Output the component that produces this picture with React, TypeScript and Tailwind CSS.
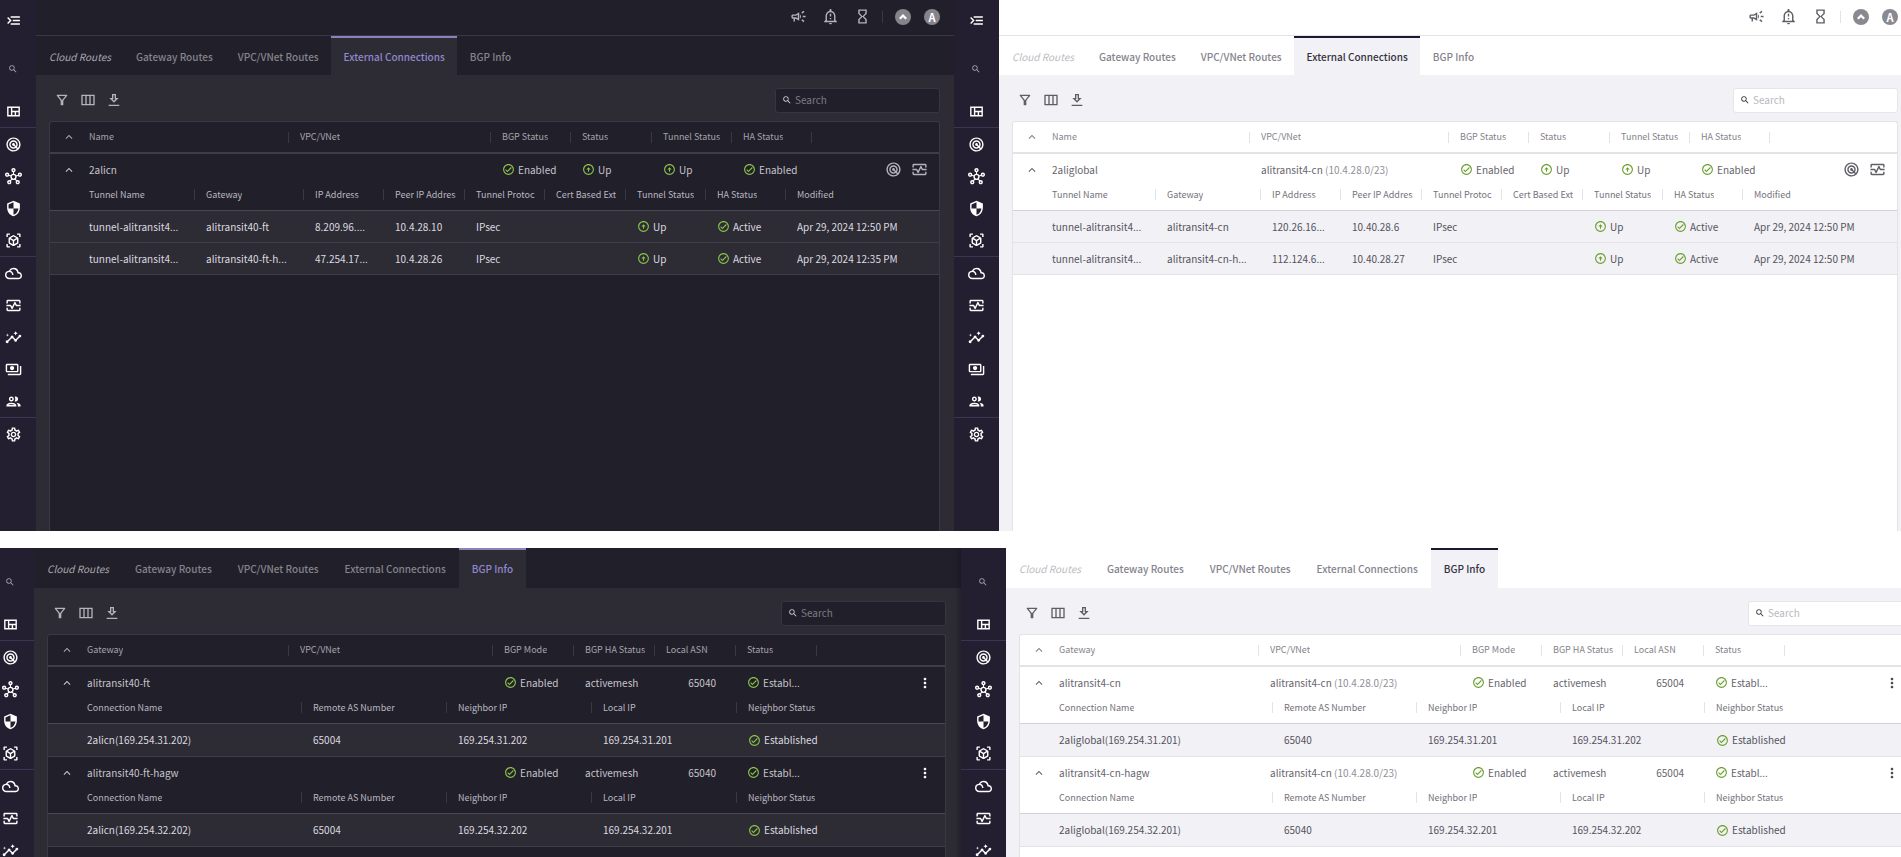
import { useState } from "react";
import type { ReactNode } from "react";
import {
  MdArrowCircleUp,
  MdFilterDrama,
  MdHourglassEmpty,
  MdInsights,
  MdKeyboardArrowUp,
  MdMenuOpen,
  MdMoreVert,
  MdOutlineCampaign,
  MdOutlineCheckCircle,
  MdOutlineFilterAlt,
  MdOutlineGroup,
  MdOutlineHub,
  MdOutlineMonitorHeart,
  MdOutlineNotificationImportant,
  MdOutlinePayments,
  MdOutlineSettings,
  MdOutlineViewQuilt,
  MdRadar,
  MdSearch,
  MdSecurity,
  MdViewInAr
} from "react-icons/md";

const TABS = ["Cloud Routes", "Gateway Routes", "VPC/VNet Routes", "External Connections", "BGP Info"];

const DARK = {
  bar: "bg-[#211f29] border-[#3a3842]",
  body: "bg-[#2d2b33]",
  tab: "border-transparent text-[#85838b]",
  tabFirst: "border-transparent text-[#aaa8b0]",
  tabActive: "border-[#8882bd] bg-[#2d2b33] text-[#8f88cf]",
  tool: "text-[#b4b2bb]",
  top: "text-[#b4b2bb]",
  avatar: "bg-[#85838c] text-white",
  field: "border-[#37353f] bg-[#211f29] placeholder:text-[#7d7b84]",
  fieldIcon: "text-[#d0ced6]",
  table: "border-[#3a3842] bg-[#211f29]",
  line: "border-[#3f3d47]",
  strongLine: "border-[#4a4852]",
  divider: "border-[#3a3842]",
  head: "text-[#a5a3ac]",
  subHead: "text-[#b9b7c0]",
  group: "text-[#c6c4cc]",
  muted: "text-[#a5a3ac]",
  row: "bg-[#2d2b33] text-[#dcdae0]",
  ok: "text-[#8bc34a]",
  kebab: "text-white"
};

const LIGHT: typeof DARK = {
  bar: "bg-white border-[#e3e2e7]",
  body: "bg-[#f2f1f6]",
  tab: "border-transparent text-[#85838d]",
  tabFirst: "border-transparent text-[#bdbcc2]",
  tabActive: "border-[#1b1830] bg-[#f2f1f6] text-[#35323f]",
  tool: "text-[#5f5d66]",
  top: "text-[#5f5d66]",
  avatar: "bg-[#8a8891] text-white",
  field: "border-[#e6e5ea] bg-white placeholder:text-[#b9b8be]",
  fieldIcon: "text-[#35323f]",
  table: "border-[#e3e2e7] bg-white",
  line: "border-[#e3e2e7]",
  strongLine: "border-[#d3d1da]",
  divider: "border-[#e3e2e7]",
  head: "text-[#85838b]",
  subHead: "text-[#74727a]",
  group: "text-[#66646d]",
  muted: "text-[#918f98]",
  row: "bg-[#f2f1f6] text-[#55535c]",
  ok: "text-[#6a9f2e]",
  kebab: "text-[#4a4852]"
};

type Theme = typeof DARK;

type Column = {
  label: string;
  width?: string;
};

type Group = {
  cells: ReactNode[];
  rows: ReactNode[][];
};

const NAV_GROUPS = [
  [{ label: "Dashboard", Icon: MdOutlineViewQuilt }],
  [
    { label: "CoPilot", Icon: MdRadar },
    { label: "Networking", Icon: MdOutlineHub },
    { label: "Security", Icon: MdSecurity },
    { label: "Cloud Resources", Icon: MdViewInAr }
  ],
  [
    { label: "Cloud Fabric", Icon: MdFilterDrama },
    { label: "Diagnostics", Icon: MdOutlineMonitorHeart },
    { label: "Monitor", Icon: MdInsights },
    { label: "Billing", Icon: MdOutlinePayments },
    { label: "Administration", Icon: MdOutlineGroup }
  ],
  [{ label: "Settings", Icon: MdOutlineSettings }]
];

const Sidebar = ({ className, inset, withMenu }: { className: string; inset: string; withMenu: boolean }) => (
  <nav aria-label="Main" className={`shrink-0 bg-[#231e30] text-white ${className}`}>
    {withMenu ? (
      <button type="button" aria-label="Expand menu" className={`flex h-10 w-full items-center justify-center ${inset}`}>
        <MdMenuOpen className="size-[17px] shrink-0 -scale-x-100" />
      </button>
    ) : (
      <div className="h-[5px]" />
    )}
    <button type="button" aria-label="Search menu" className={`flex h-[55px] w-full items-center justify-center pt-0.5 text-[#a5a3ac] ${inset}`}>
      <MdSearch className="size-[10px] shrink-0" />
    </button>
    {NAV_GROUPS.map((group, index) => (
      <ul key={index} className="border-b border-[#3b3455] last:border-b-0">
        {group.map(({ label, Icon }) => (
          <li key={label}>
            <a href="#" aria-label={label} className={`flex h-8 items-center justify-center ${inset}`}>
              <Icon className="size-[17px] shrink-0" />
            </a>
          </li>
        ))}
      </ul>
    ))}
  </nav>
);

const TopBar = ({ theme, className }: { theme: Theme; className: string }) => (
  <header className={`flex h-9 items-center justify-end border-b pb-0.5 ${theme.bar} ${className}`}>
    {[
      { label: "Announcements", Icon: MdOutlineCampaign },
      { label: "Notifications", Icon: MdOutlineNotificationImportant },
      { label: "Tasks", Icon: MdHourglassEmpty }
    ].map(({ label, Icon }) => (
      <button key={label} type="button" aria-label={label} className={`flex w-8 justify-center ${theme.top}`}>
        <Icon className="size-[17px]" />
      </button>
    ))}
    <span className={`mr-3 ml-1 h-3 border-r ${theme.divider}`} />
    <button type="button" aria-label="Controller" className={`mr-[13px] flex size-4 items-center justify-center rounded-full ${theme.avatar}`}>
      <svg viewBox="0 0 16 16" className="size-4" fill="none" stroke="currentColor" strokeWidth="2.2">
        <path d="M4.8 9.8 8 6.6l3.2 3.2" />
      </svg>
    </button>
    <button type="button" aria-label="Account" className={`flex size-4 items-center justify-center rounded-full text-[11px] font-bold leading-4 ${theme.avatar}`}>
      A
    </button>
  </header>
);

type TabBarProps = {
  theme: Theme;
  className: string;
  tabClass: string;
  active: string;
  onSelect: (tab: string) => void;
};

const TabBar = ({ theme, className, tabClass, active, onSelect }: TabBarProps) => (
  <div role="tablist" className={`flex ${className} ${theme.bar}`}>
    {TABS.map((tab, index) => (
      <button
        key={tab}
        type="button"
        role="tab"
        aria-selected={tab === active}
        onClick={() => onSelect(tab)}
        className={`whitespace-nowrap border-t-2 pb-px text-[10px] ${tabClass} ${
          tab === active
            ? `font-medium ${theme.tabActive}`
            : index === 0
              ? `italic ${theme.tabFirst}`
              : `font-medium ${theme.tab}`
        }`}
      >
        {tab}
      </button>
    ))}
  </div>
);

const Toolbar = ({ theme, searchId }: { theme: Theme; searchId: string }) => (
  <div className="flex h-[46px] items-center pt-1">
    <div className={`flex items-center gap-[9px] pl-[5px] ${theme.tool}`}>
      <button type="button" aria-label="Filter">
        <MdOutlineFilterAlt className="size-4" />
      </button>
      <button type="button" aria-label="Columns">
        <svg viewBox="0 0 24 24" className="mx-px size-4" fill="none" stroke="currentColor" strokeWidth="2">
          <path d="M3 5h18v14H3zM9 5v14M15 5v14" />
        </svg>
      </button>
      <button type="button" aria-label="Download">
        <svg viewBox="0 0 24 24" className="size-4" fill="currentColor">
          <path d="M19 9h-4V3H9v6H5l7 7 7-7zm-8 2V5h2v6h1.17L12 13.17 9.83 11H11zM4 19h16v2H4z" />
        </svg>
      </button>
    </div>
    <label htmlFor={searchId} className={`ml-auto flex h-[25px] w-[165px] items-center rounded-[3px] border pl-1.5 ${theme.field}`}>
      <MdSearch className={`mr-[3px] size-[10px] shrink-0 ${theme.fieldIcon}`} />
      <input
        id={searchId}
        type="search"
        placeholder="Search"
        className={`w-full bg-transparent text-[10px] leading-4 outline-none ${theme.field}`}
      />
    </label>
  </div>
);

const Status = ({ theme, kind, children }: { theme: Theme; kind: "check" | "up"; children: ReactNode }) => {
  const Icon = kind === "check" ? MdOutlineCheckCircle : MdArrowCircleUp;
  return (
    <span className="flex items-center gap-[3px]">
      <Icon className={`size-[13px] shrink-0 ${theme.ok}`} />
      {children}
    </span>
  );
};

const HeadLabel = ({ theme, label, last }: { theme: Theme; label: string; last: boolean }) => (
  <div className={`flex h-[11px] items-center pr-2 pl-[11px] ${last ? "" : `border-r ${theme.divider}`}`}>
    <span className="overflow-hidden whitespace-nowrap">{label}</span>
  </div>
);

type DataTableProps = {
  theme: Theme;
  columns: Column[];
  subColumns: Column[];
  groups: Group[];
  rowHeight: string;
  actions: ReactNode;
};

const DataTable = ({ theme, columns, subColumns, groups, rowHeight, actions }: DataTableProps) => {
  const [collapsed, setCollapsed] = useState<number[]>([]);
  const allCollapsed = collapsed.length === groups.length;

  const toggleGroup = (index: number) => {
    setCollapsed(prev => (prev.includes(index) ? prev.filter(item => item !== index) : [...prev, index]));
  };

  const toggleAll = () => {
    setCollapsed(allCollapsed ? [] : groups.map((_, index) => index));
  };

  return (
    <div className={`flex-1 overflow-hidden rounded-t-[3px] border border-b-0 ${theme.table}`}>
      <table className="w-full table-fixed border-separate border-spacing-0 text-left">
        <colgroup>
          <col className="w-7" />
          {columns.map(column => (
            <col key={column.label} className={column.width} />
          ))}
          <col />
        </colgroup>
        <thead className={`text-[9px] leading-4 ${theme.head}`}>
          <tr>
            <th className={`h-8 border-b-2 ${theme.line}`}>
              <button type="button" aria-label="Toggle all" onClick={toggleAll} className="flex w-full justify-end pr-0.5">
                <MdKeyboardArrowUp className={`size-[14px] ${allCollapsed ? "rotate-180" : ""}`} />
              </button>
            </th>
            {columns.map(column => (
              <th key={column.label} className={`border-b-2 font-normal ${theme.line}`}>
                <HeadLabel theme={theme} label={column.label} last={false} />
              </th>
            ))}
            <th className={`border-b-2 ${theme.line}`} />
          </tr>
        </thead>
        {groups.map((group, groupIndex) => {
          const open = !collapsed.includes(groupIndex);
          return (
            <tbody key={groupIndex}>
              <tr className={`text-[10px] leading-4 ${theme.group}`}>
                <td className="h-[31px]">
                  <button
                    type="button"
                    aria-label="Toggle group"
                    aria-expanded={open}
                    onClick={() => toggleGroup(groupIndex)}
                    className="flex w-full justify-end pr-0.5"
                  >
                    <MdKeyboardArrowUp className={`size-[14px] ${open ? "" : "rotate-180"}`} />
                  </button>
                </td>
                {group.cells.map((cell, index) => (
                  <td key={index} className="whitespace-nowrap pl-[11px]">
                    {cell}
                  </td>
                ))}
                <td>{actions}</td>
              </tr>
              {open ? (
                <tr>
                  <td colSpan={columns.length + 2}>
                    <table className="w-full table-fixed border-separate border-spacing-0">
                      <colgroup>
                        <col className="w-7" />
                        {subColumns.map(column => (
                          <col key={column.label} className={column.width} />
                        ))}
                      </colgroup>
                      <thead className={`text-[9px] leading-4 ${theme.subHead}`}>
                        <tr>
                          <td className={`h-[26px] border-b ${theme.strongLine}`} />
                          {subColumns.map((column, index) => (
                            <th key={column.label} className={`border-b pb-1.5 font-normal ${theme.strongLine}`}>
                              <HeadLabel theme={theme} label={column.label} last={index === subColumns.length - 1} />
                            </th>
                          ))}
                        </tr>
                      </thead>
                      <tbody className={`text-[10px] leading-4 ${theme.row}`}>
                        {group.rows.map((row, rowIndex) => (
                          <tr key={rowIndex}>
                            <td className={`border-b ${rowHeight} ${theme.line}`} />
                            {row.map((cell, index) => (
                              <td key={index} className={`whitespace-nowrap border-b pl-[11px] ${theme.line}`}>
                                {cell}
                              </td>
                            ))}
                          </tr>
                        ))}
                      </tbody>
                    </table>
                  </td>
                </tr>
              ) : null}
            </tbody>
          );
        })}
      </table>
    </div>
  );
};

const connectionGroup = (theme: Theme, name: string, vpc: ReactNode, tunnels: string[][]): Group => ({
  cells: [
    name,
    vpc,
    <Status theme={theme} kind="check">Enabled</Status>,
    <Status theme={theme} kind="up">Up</Status>,
    <Status theme={theme} kind="up">Up</Status>,
    <Status theme={theme} kind="check">Enabled</Status>
  ],
  rows: tunnels.map(([tunnel, gateway, ip, peerIp, modified]) => [
    tunnel,
    gateway,
    ip,
    peerIp,
    "IPsec",
    "",
    <Status theme={theme} kind="up">Up</Status>,
    <Status theme={theme} kind="check">Active</Status>,
    modified
  ])
});

const bgpGroup = (theme: Theme, gateway: string, vpc: ReactNode, asn: string, connection: string[]): Group => ({
  cells: [
    gateway,
    vpc,
    <Status theme={theme} kind="check">Enabled</Status>,
    "activemesh",
    <span className="block pr-5 text-right">{asn}</span>,
    <Status theme={theme} kind="check">Establ...</Status>
  ],
  rows: [[...connection, <Status theme={theme} kind="check">Established</Status>]]
});

const connectionColumns = (name: string, vpc: string): Column[] => [
  { label: "Name", width: name },
  { label: "VPC/VNet", width: vpc },
  { label: "BGP Status", width: "w-20" },
  { label: "Status", width: "w-[81px]" },
  { label: "Tunnel Status", width: "w-20" },
  { label: "HA Status", width: "w-20" }
];

const tunnelColumns = (name: string, gateway: string): Column[] => [
  { label: "Tunnel Name", width: name },
  { label: "Gateway", width: gateway },
  { label: "IP Address", width: "w-20" },
  { label: "Peer IP Address", width: "w-[81px]" },
  { label: "Tunnel Protoc", width: "w-20" },
  { label: "Cert Based Ext", width: "w-[81px]" },
  { label: "Tunnel Status", width: "w-20" },
  { label: "HA Status", width: "w-20" },
  { label: "Modified" }
];

const bgpColumns = (gateway: string, vpc: string): Column[] => [
  { label: "Gateway", width: gateway },
  { label: "VPC/VNet", width: vpc },
  { label: "BGP Mode", width: "w-[81px]" },
  { label: "BGP HA Status", width: "w-[81px]" },
  { label: "Local ASN", width: "w-[81px]" },
  { label: "Status", width: "w-[81px]" }
];

const neighborColumns = (name: string, width: string): Column[] => [
  { label: "Connection Name", width: name },
  { label: "Remote AS Number", width },
  { label: "Neighbor IP", width },
  { label: "Local IP", width },
  { label: "Neighbor Status" }
];

const TransitVpc = () => (
  <>
    alitransit4-cn <span className={LIGHT.muted}>(10.4.28.0/23)</span>
  </>
);

const ConnectionActions = ({ theme }: { theme: Theme }) => (
  <div className={`flex justify-end gap-[9px] pr-[11px] ${theme.tool}`}>
    <button type="button" aria-label="Trace">
      <MdRadar className="size-[17px]" />
    </button>
    <button type="button" aria-label="Diagnostics">
      <MdOutlineMonitorHeart className="size-[17px]" />
    </button>
  </div>
);

const BgpActions = ({ theme }: { theme: Theme }) => (
  <div className={`flex justify-end pr-3 ${theme.kebab}`}>
    <button type="button" aria-label="More actions">
      <MdMoreVert className="size-4" />
    </button>
  </div>
);

type PanelProps = {
  theme: Theme;
  initialTab: string;
  searchId: string;
  sidebar: ReactNode;
  topBar?: ReactNode;
  tabBarClass: string;
  tabClass: string;
  bodyClass: string;
  className?: string;
  children: ReactNode;
};

const Panel = ({
  theme,
  initialTab,
  searchId,
  sidebar,
  topBar,
  tabBarClass,
  tabClass,
  bodyClass,
  className = "",
  children
}: PanelProps) => {
  const [active, setActive] = useState(initialTab);
  return (
    <section className={`flex min-w-0 ${className}`}>
      {sidebar}
      <div className={`flex min-w-0 flex-1 flex-col overflow-hidden ${theme.body}`}>
        {topBar}
        <TabBar theme={theme} className={tabBarClass} tabClass={tabClass} active={active} onSelect={setActive} />
        <div className={`flex flex-1 flex-col ${bodyClass}`}>
          <Toolbar theme={theme} searchId={searchId} />
          {children}
        </div>
      </div>
    </section>
  );
};

export default function App() {
  return (
    <main className="flex h-screen flex-col gap-[17px] overflow-hidden bg-white font-['Noto_Sans_CJK_SC','Noto_Sans',sans-serif]">
      <div className="grid flex-[531] grid-cols-[954fr_947fr]">
        <Panel
          theme={DARK}
          initialTab="External Connections"
          searchId="search-connections-dark"
          sidebar={<Sidebar className="w-9" inset="pr-2.5" withMenu />}
          topBar={<TopBar theme={DARK} className="pr-3.5" />}
          tabBarClass="h-[39px]"
          tabClass="pr-3 pl-[13px]"
          bodyClass="pr-3.5 pl-[13px]"
        >
          <DataTable
            theme={DARK}
            columns={connectionColumns("w-[211px]", "w-[202px]")}
            subColumns={tunnelColumns("w-[117px]", "w-[109px]")}
            rowHeight="h-8"
            actions={<ConnectionActions theme={DARK} />}
            groups={[
              connectionGroup(DARK, "2alicn", "", [
                ["tunnel-alitransit4...", "alitransit40-ft", "8.209.96....", "10.4.28.10", "Apr 29, 2024 12:50 PM"],
                ["tunnel-alitransit4...", "alitransit40-ft-h...", "47.254.17...", "10.4.28.26", "Apr 29, 2024 12:35 PM"]
              ])
            ]}
          />
        </Panel>
        <Panel
          theme={LIGHT}
          initialTab="External Connections"
          searchId="search-connections-light"
          sidebar={<Sidebar className="w-[45px]" inset="pr-px" withMenu />}
          topBar={<TopBar theme={LIGHT} className="pr-[3px]" />}
          tabBarClass="h-[39px]"
          tabClass="pr-3 pl-[13px]"
          bodyClass="pr-[3px] pl-[13px]"
        >
          <DataTable
            theme={LIGHT}
            columns={connectionColumns("w-[209px]", "w-[199px]")}
            subColumns={tunnelColumns("w-[115px]", "w-[105px]")}
            rowHeight="h-8"
            actions={<ConnectionActions theme={LIGHT} />}
            groups={[
              connectionGroup(LIGHT, "2aliglobal", <TransitVpc />, [
                ["tunnel-alitransit4...", "alitransit4-cn", "120.26.16...", "10.40.28.6", "Apr 29, 2024 12:50 PM"],
                ["tunnel-alitransit4...", "alitransit4-cn-h...", "112.124.6...", "10.40.28.27", "Apr 29, 2024 12:50 PM"]
              ])
            ]}
          />
        </Panel>
      </div>

      <div className="grid min-h-0 flex-[309] grid-cols-[961fr_940fr] overflow-hidden">
        <Panel
          theme={DARK}
          initialTab="BGP Info"
          searchId="search-bgp-dark"
          sidebar={<Sidebar className="w-[34px]" inset="pr-3.5" withMenu={false} />}
          tabBarClass="h-10"
          tabClass="px-[13px]"
          bodyClass="pr-[15px] pl-[13px]"
        >
          <DataTable
            theme={DARK}
            columns={bgpColumns("w-[213px]", "w-[204px]")}
            subColumns={neighborColumns("w-[226px]", "w-[145px]")}
            rowHeight="h-[33px]"
            actions={<BgpActions theme={DARK} />}
            groups={[
              bgpGroup(DARK, "alitransit40-ft", "", "65040", ["2alicn(169.254.31.202)", "65004", "169.254.31.202", "169.254.31.201"]),
              bgpGroup(DARK, "alitransit40-ft-hagw", "", "65040", ["2alicn(169.254.32.202)", "65004", "169.254.32.202", "169.254.32.201"])
            ]}
          />
        </Panel>
        <Panel
          theme={LIGHT}
          initialTab="BGP Info"
          searchId="search-bgp-light"
          className="shadow-[0_0_8px_rgba(0,0,0,0.4)]"
          sidebar={<Sidebar className="w-[45px]" inset="pr-px" withMenu={false} />}
          tabBarClass="h-10"
          tabClass="px-[13px]"
          bodyClass="-mr-6 pr-3 pl-[13px]"
        >
          <DataTable
            theme={LIGHT}
            columns={bgpColumns("w-[211px]", "w-[202px]")}
            subColumns={neighborColumns("w-[225px]", "w-36")}
            rowHeight="h-[33px]"
            actions={<BgpActions theme={LIGHT} />}
            groups={[
              bgpGroup(LIGHT, "alitransit4-cn", <TransitVpc />, "65004", ["2aliglobal(169.254.31.201)", "65040", "169.254.31.201", "169.254.31.202"]),
              bgpGroup(LIGHT, "alitransit4-cn-hagw", <TransitVpc />, "65004", ["2aliglobal(169.254.32.201)", "65040", "169.254.32.201", "169.254.32.202"])
            ]}
          />
        </Panel>
      </div>
    </main>
  );
}
